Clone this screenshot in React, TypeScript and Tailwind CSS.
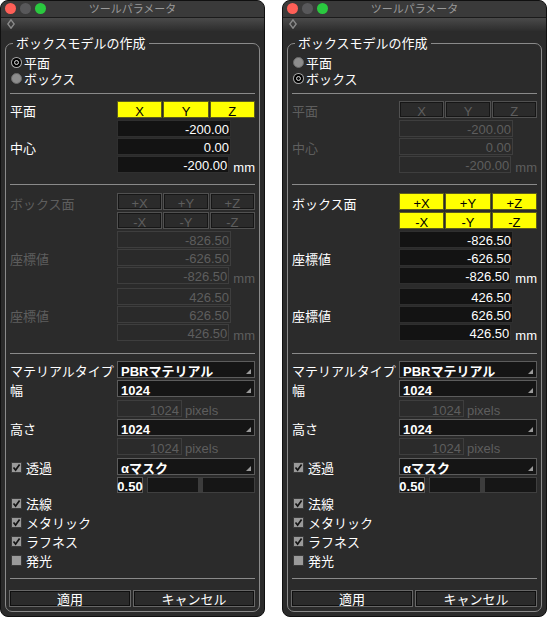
import React from "react";

type Mode = "plane" | "box";

const font = "font-['Liberation_Sans','Noto_Sans_CJK_JP',sans-serif]";
const row = "grid grid-cols-[107px_138px] items-center";
const dim = "text-[#5e5e5e]";

const Radio = ({ on, label }: { on: boolean; label: string }) => (
  <div className="flex items-center h-[16px]">
    {on ? (
      <span className="ml-[1px] w-[11px] h-[11px] rounded-full bg-[#a8a8a8] flex items-center justify-center">
        <span className="w-[9px] h-[9px] rounded-full bg-black flex items-center justify-center">
          <span className="w-[5px] h-[5px] rounded-full border border-[#d8d8d8] bg-[#111]" />
        </span>
      </span>
    ) : (
      <span className="ml-[1px] w-[11px] h-[11px] rounded-full bg-[#8d8d8d] border border-[#6a6a6a]" />
    )}
    <span className="ml-[2px] h-[16px] pt-[2px] text-[13px] leading-[16px] text-white">{label}</span>
  </div>
);

const Sep = ({ mt }: { mt: string }) => <div className={`${mt} h-px bg-[#8a8a8a]`} />;

const Label = ({ on, children }: { on: boolean; children: React.ReactNode }) => (
  <span className={`h-[17px] pt-[2px] text-[13px] leading-[17px] ${on ? "text-white" : dim}`}>{children}</span>
);

const AxisBtn = ({ on, label }: { on: boolean; label: string }) => (
  <div
    className={
      on
        ? "h-[17px] pt-[3px] flex items-center justify-center bg-[#ffff00] border border-[#5d5d1c] text-black text-[13px] leading-none"
        : "h-[17px] pt-[3px] flex items-center justify-center border border-[#515151] shadow-[inset_0_0_0_1px_#161616] text-[#5e5e5e] text-[13px] leading-none"
    }
  >
    {label}
  </div>
);

const Num = ({ on, v, mm }: { on: boolean; v: string; mm?: boolean }) => (
  <div className="flex items-center h-[17px]">
    <div
      className={`w-[114px] h-[17px] pt-[2px] flex items-center justify-end pr-[1px] text-[13px] leading-none border ${
        on ? "bg-[#131313] border-[#2f2f2f] text-white" : "bg-[#2a2a2a] border-[#3e3e3e] text-[#5e5e5e]"
      }`}
    >
      {v}
    </div>
    {mm && (
      <span className={`ml-[4px] self-end h-[17px] pt-[5px] text-[13px] leading-[14px] ${on ? "text-white" : dim}`}>
        mm
      </span>
    )}
  </div>
);

const Select = ({ v }: { v: string }) => (
  <div className="h-[17px] flex items-center pl-[3px] bg-[#151515] border border-[#5c5c5c] text-white text-[13px] font-bold leading-none">
    <span className="h-[15px] pt-[3px]">{v}</span>
    <svg className="ml-auto mr-[3px] self-end mb-[3px]" width="5" height="5" viewBox="0 0 5 5">
      <path d="M5 0 L5 5 L0 5 Z" fill="#9a9a9a" />
    </svg>
  </div>
);

const Pixels = ({ mt }: { mt: string }) => (
  <div className={`${row} ${mt}`}>
    <span />
    <div className="flex items-center">
      <div className="w-[65px] h-[17px] pt-[4px] border border-[#3e3e3e] flex items-center justify-end pr-[2px] text-[13px] leading-none text-[#5e5e5e]">
        1024
      </div>
      <span className="ml-[3px] h-[17px] pt-[3px] text-[13px] leading-[16px] text-[#5e5e5e]">pixels</span>
    </div>
  </div>
);

const Check = ({ on, label }: { on: boolean; label: string }) => (
  <div className="flex items-center h-[19px] pt-[2px]">
    <span className="ml-[1px] w-[11px] h-[11px] bg-[#9a9a9a] border border-[#3a3a3a] flex items-center justify-center">
      {on && (
        <svg width="9" height="9" viewBox="0 0 9 9">
          <path d="M1.5 4.5 L3.6 7 L7.6 1.5" stroke="#151515" strokeWidth="1.7" fill="none" />
        </svg>
      )}
    </span>
    <span className="ml-[4px] h-[17px] pt-[1px] text-[13px] leading-[17px] text-white">{label}</span>
  </div>
);

const Window = ({ mode }: { mode: Mode }) => {
  const plane = mode === "plane";
  const box = !plane;
  return (
    <div className={`w-[265px] h-[617px] flex flex-col rounded-[8px] overflow-hidden border border-[#101010] bg-[#2b2b2b] ${font}`}>
      {/* title bar */}
      <div className="h-[17px] grid grid-cols-[1fr_auto_1fr] items-center bg-[#3a3a3a]">
        <div className="flex gap-[4px] pl-[4px]">
          <span className="w-[11px] h-[11px] rounded-full bg-[#fe5f57]" />
          <span className="w-[11px] h-[11px] rounded-full bg-[#58585a]" />
          <span className="w-[11px] h-[11px] rounded-full bg-[#2ac83f]" />
        </div>
        <span className="pt-[2px] text-[11px] leading-none text-[#999]">ツールパラメータ</span>
        <span />
      </div>
      {/* toolbar */}
      <div className="h-[15px] border-t border-[#1b1b1b] bg-gradient-to-b from-[#4a4a4a] to-[#2d2d2d] flex items-center pl-[6px]">
        <svg width="8" height="10" viewBox="0 0 8 10">
          <path d="M4 0.8 L7.2 5 L4 9.2 L0.8 5 Z" stroke="#8a8a8a" strokeWidth="1.4" fill="none" />
        </svg>
      </div>
      {/* body */}
      <div className="flex-1 flex flex-col px-[4px] pt-[4px] pb-[4px]">
        <fieldset className="flex-1 border border-[#8a8a8a] rounded-[7px] px-[4px] pb-[4px]">
          <legend className="ml-[3px] px-[3px] text-[13px] leading-[17px] text-white">ボックスモデルの作成</legend>
          <div className="mt-[2px]">
            <Radio on={plane} label="平面" />
            <Radio on={box} label="ボックス" />
          </div>
          <Sep mt="mt-[7px]" />

          {/* plane section */}
          <div className={`${row} mt-[7px]`}>
            <Label on={plane}>平面</Label>
            <div className="grid grid-cols-3 gap-[1px]">
              <AxisBtn on={plane} label="X" />
              <AxisBtn on={plane} label="Y" />
              <AxisBtn on={plane} label="Z" />
            </div>
          </div>
          <div className={`${row} mt-[2px]`}>
            <Label on={plane}>中心</Label>
            <div className="flex flex-col gap-[1px]">
              <Num on={plane} v="-200.00" />
              <Num on={plane} v="0.00" />
              <Num on={plane} v="-200.00" mm />
            </div>
          </div>
          <Sep mt="mt-[11px]" />

          {/* box section */}
          <div className={`${row} mt-[8px] items-start`}>
            <div className="h-[19px] flex items-center">
              <Label on={box}>ボックス面</Label>
            </div>
            <div className="grid grid-cols-3 gap-x-[1px] gap-y-[2px]">
              <AxisBtn on={box} label="+X" />
              <AxisBtn on={box} label="+Y" />
              <AxisBtn on={box} label="+Z" />
              <AxisBtn on={box} label="-X" />
              <AxisBtn on={box} label="-Y" />
              <AxisBtn on={box} label="-Z" />
            </div>
          </div>
          <div className={`${row} mt-[2px]`}>
            <Label on={box}>座標値</Label>
            <div className="flex flex-col gap-[1px]">
              <Num on={box} v="-826.50" />
              <Num on={box} v="-626.50" />
              <Num on={box} v="-826.50" mm />
            </div>
          </div>
          <div className={`${row} mt-[4px]`}>
            <Label on={box}>座標値</Label>
            <div className="flex flex-col gap-[1px]">
              <Num on={box} v="426.50" />
              <Num on={box} v="626.50" />
              <Num on={box} v="426.50" mm />
            </div>
          </div>
          <Sep mt="mt-[12px]" />

          {/* material section */}
          <div className={`${row} mt-[7px]`}>
            <Label on>マテリアルタイプ</Label>
            <Select v="PBRマテリアル" />
          </div>
          <div className={`${row} mt-[2px]`}>
            <Label on>幅</Label>
            <Select v="1024" />
          </div>
          <Pixels mt="mt-[3px]" />
          <div className={`${row} mt-[2px]`}>
            <Label on>高さ</Label>
            <Select v="1024" />
          </div>
          <Pixels mt="mt-[2px]" />
          <div className={`${row} mt-[2px]`}>
            <Check on label="透過" />
            <Select v="αマスク" />
          </div>
          <div className={`${row} mt-[1px]`}>
            <span />
            <div className="flex items-center h-[16px]">
              <div className="w-[26px] h-[16px] pt-[3px] flex items-center justify-center bg-[#111] border border-[#5a5a5a] text-white text-[13px] font-bold leading-none">
                0.50
              </div>
              <div className="flex-1 ml-[4px] h-[16px] bg-[#161616] border border-[#3f3f3f] pl-[50px]">
                <div className="w-[5px] h-full bg-[#3c3c3c]" />
              </div>
            </div>
          </div>
          <div className="mt-[0px]">
            <Check on label="法線" />
            <Check on label="メタリック" />
            <Check on label="ラフネス" />
            <Check on={false} label="発光" />
          </div>
          <Sep mt="mt-[9px]" />
          <div className="mt-[11px] -ml-px grid grid-cols-2 gap-[2px]">
            <div className="h-[17px] pt-[2px] flex items-center justify-center border border-[#676767] shadow-[inset_0_0_0_1px_#0f0f0f] text-white text-[13px] leading-none">
              適用
            </div>
            <div className="h-[17px] pt-[2px] flex items-center justify-center border border-[#676767] shadow-[inset_0_0_0_1px_#0f0f0f] text-white text-[13px] leading-none">
              キャンセル
            </div>
          </div>
        </fieldset>
      </div>
    </div>
  );
};

export default function App() {
  return (
    <div className="w-[547px] h-[622px] bg-white flex gap-[17px]">
      <Window mode="plane" />
      <Window mode="box" />
    </div>
  );
}
